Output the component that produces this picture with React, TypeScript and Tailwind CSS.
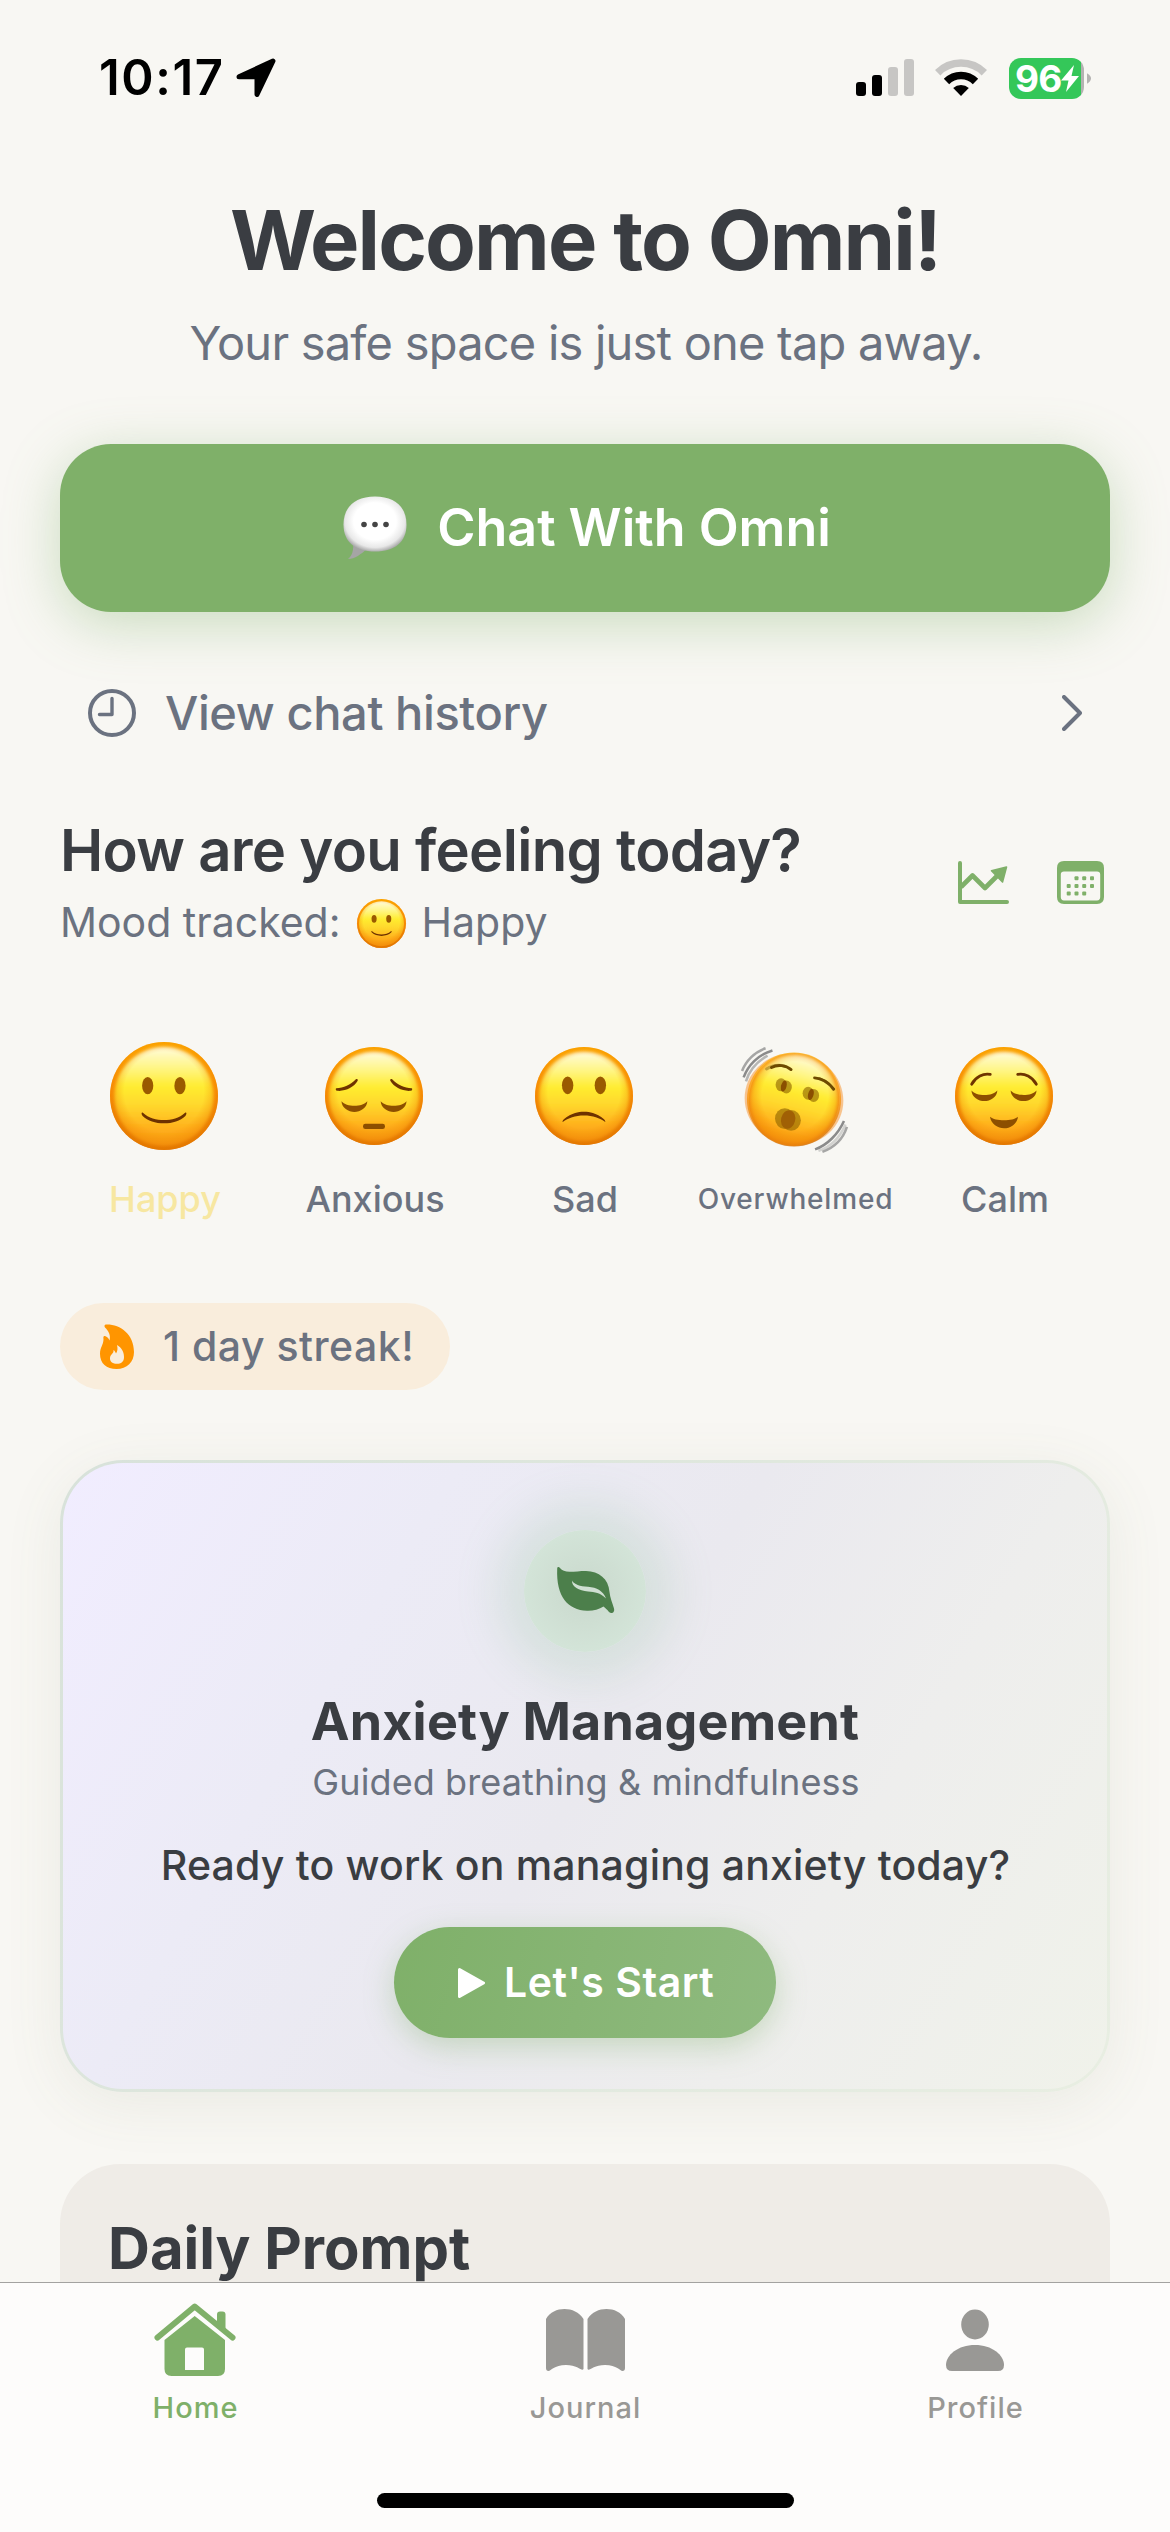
import type { ReactNode } from "react";

function Face({ children, size, tilt = false }: { children: ReactNode; size: string; tilt?: boolean }) {
  return (
    <svg viewBox="0 0 100 100" className={`${size} overflow-visible`}>
      <defs>
        <linearGradient id="rim" x1="0" y1="0" x2="0" y2="1">
          <stop offset="0" stopColor="#ffb000" />
          <stop offset="0.45" stopColor="#fb9208" />
          <stop offset="1" stopColor="#cc6700" />
        </linearGradient>
        <linearGradient id="skin" x1="0" y1="0" x2="0" y2="1">
          <stop offset="0" stopColor="#fffbdc" />
          <stop offset="0.2" stopColor="#fff68a" />
          <stop offset="0.4" stopColor="#ffec30" />
          <stop offset="0.6" stopColor="#ffd62c" />
          <stop offset="0.82" stopColor="#ffb01c" />
          <stop offset="1" stopColor="#f59a12" />
        </linearGradient>
        <radialGradient id="shade" cx="0.5" cy="0.46" r="0.54">
          <stop offset="0.68" stopColor="#f58a00" stopOpacity="0" />
          <stop offset="1" stopColor="#f08000" stopOpacity="0.7" />
        </radialGradient>
        <filter id="soft" x="-10%" y="-10%" width="120%" height="120%">
          <feGaussianBlur stdDeviation="1.4" />
        </filter>
      </defs>
      {tilt ? (
        <g>
          <ellipse cx="50" cy="53.5" rx="50.5" ry="47" fill="#f6a04a" opacity="0.6" transform="rotate(12 50 53.5)" />
          <ellipse cx="50" cy="53.5" rx="48" ry="48" fill="url(#rim)" opacity="0.75" />
          <g transform="rotate(14 50 53.5)">
            <ellipse cx="50" cy="53.5" rx="44.5" ry="45.5" fill="url(#skin)" filter="url(#soft)" />
            <ellipse cx="50" cy="53.5" rx="46" ry="47.5" fill="url(#shade)" />
          </g>
        </g>
      ) : (
        <g>
          <circle cx="50" cy="50" r="50" fill="url(#rim)" />
          <circle cx="50" cy="50.5" r="46" fill="url(#skin)" filter="url(#soft)" />
          <circle cx="50" cy="50" r="50" fill="url(#shade)" />
        </g>
      )}
      {children}
    </svg>
  );
}

function HappyFace({ size }: { size: string }) {
  return (
    <Face size={size}>
      <ellipse cx="34.9" cy="40.4" rx="5.2" ry="8" fill="#9a5a00" />
      <ellipse cx="64.8" cy="40.4" rx="5.2" ry="8" fill="#9a5a00" />
      <path d="M30.2 65.2C36 70.6 43 72.3 50 72.3S64 70.6 69.8 65.2C71.2 65 71 67 69.8 68.5C65 73 58 75.3 50 75.3S35 73 30.2 68.5C29 67 28.8 65 30.2 65.2Z" fill="#6e3200" />
    </Face>
  );
}

function AnxiousFace() {
  return (
    <Face size="size-[98px]">
      <g fill="#6e3400">
        <path d="M11.500 42C19 42 26 38.500 31.500 33C33 32 34 33.200 33.200 34.800C29.500 41 21 45.500 12.500 44.700C10.800 44.300 10.500 42.500 11.500 42Z" />
        <path d="M88.500 42C81 42 74 38.500 68.500 33C67 32 66 33.200 66.800 34.800C70.500 41 79 45.500 87.500 44.700C89.200 44.300 89.500 42.500 88.500 42Z" />
      </g>
      <g fill="#8d4f00">
        <path d="M16.8 55.3C22 61.5 38 61.5 43.2 55.3C43 62 36 66.2 30 66.2S17 62 16.8 55.3Z" />
        <path d="M56.8 55.3C62 61.5 78 61.5 83.2 55.3C83 62 76 66.2 70 66.2S57 62 56.8 55.3Z" />
        <rect x="38.8" y="78.2" width="22.4" height="5.5" rx="2.4" />
      </g>
    </Face>
  );
}

function SadFace() {
  return (
    <Face size="size-[98px]">
      <ellipse cx="33.3" cy="39.1" rx="5.8" ry="9" fill="#9a5a00" />
      <ellipse cx="66.7" cy="39.1" rx="5.8" ry="9" fill="#9a5a00" />
      <path d="M28.3 76.5C27 74.5 37 66 50 66S73 74.5 71.7 76.5C66 72.5 59 70 50 70S34 72.5 28.3 76.5Z" fill="#6e3200" />
    </Face>
  );
}

function OverwhelmedFace() {
  return (
    <Face size="size-[98px]" tilt>
      <g fill="none" stroke="#6e4a00" strokeLinecap="round" strokeWidth="3">
        <path d="M27 21C33 17.500 42 18.500 47 23" />
        <path d="M71 31.5C79 32 86 37 90.5 43" />
        <path d="M22 22.5C28 18.5 36 18 42 20" opacity="0.4" />
        <path d="M76 32.5C82 34 88 39 90 43" opacity="0.5" />
      </g>
      <g fill="#8f6400" opacity="0.62">
        <ellipse cx="36.8" cy="38.6" rx="5.6" ry="6.6" />
        <ellipse cx="42.2" cy="40.8" rx="5.6" ry="6.6" />
        <ellipse cx="64.4" cy="47.2" rx="5.6" ry="6.6" />
        <ellipse cx="70" cy="49.4" rx="5.6" ry="6.6" />
        <ellipse cx="40.6" cy="73" rx="10" ry="10.6" />
        <ellipse cx="47" cy="74.8" rx="10" ry="10.6" />
      </g>
      <g fill="#8a4f00">
        <ellipse cx="39.6" cy="39.8" rx="2.8" ry="5.8" transform="rotate(14 39.6 39.8)" />
        <ellipse cx="67.2" cy="48.4" rx="2.8" ry="5.8" transform="rotate(14 67.2 48.4)" />
        <ellipse cx="44" cy="74" rx="7.2" ry="9.6" transform="rotate(14 44 74)" fill="#a06005" />
      </g>
      <g fill="none" stroke="#8b8b8b" strokeWidth="2.6">
        <path d="M-3 24.5C1 14 10 5 21 1.2" opacity="0.75" />
        <path d="M-1.4 31C3 19 13 8 28 3.5" />
        <path d="M1 35C4 25 12 15 23 8.8" opacity="0.6" />
        <path d="M71.5 104.5C84 100 95 89 101 75.5" />
        <path d="M79 107C91 102.500 100 94 104 81.500" opacity="0.75" />
        <path d="M75 106C87 102 97 92 102.500 79" opacity="0.35" />
      </g>
    </Face>
  );
}

function CalmFace() {
  return (
    <Face size="size-[98px]">
      <g fill="none" stroke="#6e3400" strokeWidth="2.8" strokeLinecap="round">
        <path d="M17 38C21 30.500 29 26.500 36 28" />
        <path d="M83 38C79 30.500 71 26.500 64 28" />
      </g>
      <g fill="#8d4f00">
        <path d="M16.800 44.300C22 50.500 38 50.500 43.200 44.300C43 51 36 55.200 30 55.200S17 51 16.800 44.300Z" />
        <path d="M56.800 44.300C62 50.500 78 50.500 83.200 44.300C83 51 76 55.200 70 55.200S57 51 56.800 44.300Z" />
        <path d="M35.700 71.200C41 76 59 76 64.300 71.200C63.500 78.500 56 83 50 83S36.500 78.500 35.700 71.200Z" />
      </g>
    </Face>
  );
}

function StatusBar() {
  return (
    <header className="flex h-[156px] shrink-0 items-center justify-between pr-[79px] pl-[99px] text-black">
      <div className="flex items-center">
        <span className="text-[49px] font-semibold tracking-[1.6px]">10:17</span>
        <svg viewBox="0 0 40 40" className="ml-[11px] size-[40px]">
          <path d="M3 18.800L37 3L21 36.500V18.800Z" fill="#000" stroke="#000" strokeWidth="5" strokeLinejoin="round" />
        </svg>
      </div>
      <div className="flex items-center">
        <svg viewBox="0 0 58 38" className="h-[38px] w-[58px]">
          <rect x="0" y="23" width="10" height="14" rx="3" />
          <rect x="16" y="16" width="10" height="21" rx="3" />
          <rect x="32" y="8" width="10" height="29" rx="3" fill="#c7c6c4" />
          <rect x="48" y="0" width="10" height="37" rx="3" fill="#c7c6c4" />
        </svg>
        <svg viewBox="0 0 52 38" className="ml-[21px] h-[38px] w-[52px]">
          <path d="M2.700 13.700A33 33 0 0 1 49.300 13.700" fill="none" stroke="#c7c6c4" strokeWidth="7.600" />
          <path d="M11.500 22.500A20.500 20.500 0 0 1 40.500 22.500" fill="none" stroke="#000" strokeWidth="7.600" />
          <path d="M26 37L18.200 29A11.500 11.500 0 0 1 33.800 29Z" fill="#000" />
        </svg>
        <div className="ml-[22px] flex h-[41px] w-[75px] items-center rounded-[12px] bg-linear-to-r from-[#34c759] from-96% to-[#b4b3b1] to-96% pl-[6px]">
          <span className="text-[37px] leading-[41px] font-bold tracking-[-0.8px] text-white">96</span>
          <svg viewBox="0 0 18 27" className="h-[27px] w-[18px] shrink-0">
            <path d="M13 0L0 15.500H7.500L5 27L18 11H10.500Z" fill="#fff" />
          </svg>
        </div>
        <svg viewBox="0 0 5 13" className="ml-[3px] h-[13px] w-[4px]">
          <path d="M0 0Q5 3 5 6.500T0 13Z" fill="#b4b3b1" />
        </svg>
      </div>
    </header>
  );
}

function MoodItem({ face, label, text }: { face: ReactNode; label: string; text: string }) {
  return (
    <div className="flex w-[210px] flex-col items-center">
      <div className="flex h-[120px] items-center">{face}</div>
      <span className={`mt-[18px] leading-[50px] font-medium whitespace-nowrap ${text}`}>{label}</span>
    </div>
  );
}

function Tab({ icon, label, color }: { icon: ReactNode; label: string; color: string }) {
  return (
    <div className={`flex w-[390px] flex-col items-center ${color}`}>
      <div className="flex h-[76px] items-end justify-center">{icon}</div>
      <span className="mt-[12px] pl-[1px] text-[29px] leading-[40px] font-medium tracking-[1px]">{label}</span>
    </div>
  );
}

export default function App() {
  return (
    <div className="flex h-[2532px] w-[1170px] flex-col overflow-hidden bg-[#f8f7f3] font-['Inter',sans-serif] text-[#3a3d42]">
      <div className="flex h-[2282px] shrink-0 flex-col overflow-hidden">
        <StatusBar />
        <main className="flex flex-1 flex-col px-[60px]">
          <h1 className="mt-[34px] text-center text-[83px] leading-[100px] font-bold tracking-[-1.9px]">Welcome to Omni!</h1>
          <p className="mt-[23px] pl-[2px] text-center text-[47px] leading-[60px] tracking-[-0.78px] text-[#6b7280]">Your safe space is just one tap away.</p>

          <button className="mt-[71px] flex h-[168px] shrink-0 items-center justify-center rounded-[51px] bg-[#7fb069] pl-[4px] text-[52px] font-semibold text-white shadow-[0_12px_54px_rgba(127,176,105,0.38)]">
            <svg viewBox="0 0 64 64" className="mr-[30px] size-[64px]">
              <defs>
                <radialGradient id="bubble" cx="0.5" cy="0.45" r="0.56">
                  <stop offset="0.6" stopColor="#ffffff" />
                  <stop offset="0.85" stopColor="#e8e8e8" />
                  <stop offset="1" stopColor="#a9a9a9" />
                </radialGradient>
              </defs>
              <path d="M10 46C11 54 9 60 5 63C12 63 18 58 24 53Z" fill="#a5a5a5" />
              <path d="M32 0.500C52 0.500 63.500 11 63.500 28.500S52 55.500 32 55.500S0.500 46 0.500 28.500S12 0.500 32 0.500Z" fill="url(#bubble)" />
              <g fill="#444"><circle cx="21" cy="28.500" r="2.800" /><circle cx="32" cy="28.500" r="2.800" /><circle cx="43" cy="28.500" r="2.800" /></g>
            </svg>
            <span>Chat With Omni</span>
          </button>

          <div className="mt-[71px] flex h-[60px] shrink-0 items-center pr-[28px] pl-[28px] text-[#6b7280]">
            <svg viewBox="0 0 48 48" className="size-[48px]" fill="none" stroke="currentColor" strokeLinecap="round" strokeLinejoin="round">
              <circle cx="24" cy="24" r="22" strokeWidth="4" />
              <path d="M24 9.500V25.500H11.500" strokeWidth="3.400" />
            </svg>
            <span className="ml-[29px] text-[47px] leading-[60px] font-medium tracking-[-0.4px]">View chat history</span>
            <svg viewBox="0 0 20 36" className="ml-auto h-[36px] w-[20px]" fill="none" stroke="currentColor" strokeWidth="4" strokeLinecap="round" strokeLinejoin="round">
              <path d="M2 2L18 18L2 34" />
            </svg>
          </div>

          <section className="mt-[67px] flex shrink-0 items-center justify-between">
            <div>
              <h2 className="text-[58px] leading-[80px] font-semibold tracking-[-0.7px] whitespace-nowrap">How are you feeling today?</h2>
              <div className="mt-[3px] flex h-[60px] items-center text-[41px] text-[#6b7280]">
                <span>Mood tracked:</span>
                <span className="mx-[16px] flex"><HappyFace size="size-[49px]" /></span>
                <span>Happy</span>
              </div>
            </div>
            <div className="flex items-center gap-[48px] pt-[2px] pr-[6px] text-[#7fb069]">
              <svg viewBox="0 0 51 43" className="h-[43px] w-[51px]" fill="none" stroke="currentColor" strokeWidth="4" strokeLinecap="round" strokeLinejoin="round">
                <path d="M2 2V41H49" />
                <path d="M3 26L14.500 14.500L27 27L42 12" strokeWidth="4.600" strokeLinecap="butt" />
                <path d="M33.500 9.800L48.500 6L44.500 21Z" fill="currentColor" strokeWidth="1.600" />
              </svg>
              <svg viewBox="0 0 47 43" className="h-[43px] w-[47px]">
                <path fill="currentColor" fillRule="evenodd" d="M7 0H40Q47 0 47 7V36Q47 43 40 43H7Q0 43 0 36V7Q0 0 7 0ZM7 10.500Q3.800 10.500 3.800 13.500V36Q3.800 39.400 7 39.400H40Q43.200 39.400 43.200 36V13.500Q43.200 10.500 40 10.500Z" />
                <g fill="currentColor">
                  <rect x="17.500" y="15.200" width="4" height="4" rx="1" /><rect x="25.200" y="15.200" width="4" height="4" rx="1" /><rect x="33" y="15.200" width="4" height="4" rx="1" />
                  <rect x="9.700" y="22.900" width="4" height="4" rx="1" /><rect x="17.500" y="22.900" width="4" height="4" rx="1" /><rect x="25.200" y="22.900" width="4" height="4" rx="1" /><rect x="33" y="22.900" width="4" height="4" rx="1" />
                  <rect x="9.700" y="30.600" width="4" height="4" rx="1" /><rect x="17.500" y="30.600" width="4" height="4" rx="1" /><rect x="25.200" y="30.600" width="4" height="4" rx="1" />
                </g>
              </svg>
            </div>
          </section>

          <section className="mt-[83px] ml-[-1px] flex w-[1050px] shrink-0">
            <MoodItem face={<HappyFace size="size-[108px]" />} label="Happy" text="pl-[2px] text-[36px] text-[#f7e7a1]" />
            <MoodItem face={<AnxiousFace />} label="Anxious" text="pl-[2px] text-[36px] text-[#6b7280]" />
            <MoodItem face={<SadFace />} label="Sad" text="pl-[2px] text-[36px] text-[#6b7280]" />
            <MoodItem face={<OverwhelmedFace />} label="Overwhelmed" text="pl-[3px] text-[28px] tracking-[0.8px] text-[#6b7280]" />
            <MoodItem face={<CalmFace />} label="Calm" text="pl-[2px] text-[36px] text-[#6b7280]" />
          </section>

          <div className="mt-[79px] flex h-[87px] w-[390px] shrink-0 items-center rounded-full bg-[#f9eddc] pl-[40px] text-[41px] font-medium tracking-[0.5px] text-[#6b7280]">
            <svg viewBox="0 0 34 45" className="mr-[29px] h-[45px] w-[34px]">
              <path fill="#ff9500" fillRule="evenodd" d="M6 0.500C20 0 34 10 34 28C34 38 27 45 16.500 45C6.500 45 0 39.500 0 30C0 23 3.500 21 3.500 15C3 12 4 11.500 5.500 12.200C7.500 13 9 14.500 9.500 16.500C11 11 8.500 7 5 3.500C4 2 4.500 0.600 6 0.500ZM17 21C18 25 17.500 27 16 29.500C15.500 28 14.500 26.500 13.500 26C14 30 10 30 10 34.500C10 38 13 39.800 17 39.800S24 38 24 33C24 27 21 23.500 17 21Z" />
            </svg>
            <span>1 day streak!</span>
          </div>

          <section className="mt-[70px] flex h-[632px] shrink-0 flex-col items-center rounded-[63px] bg-[linear-gradient(121deg,#d8e2da,#e8eee2)] p-[3px] shadow-[0_12px_60px_rgba(100,110,80,0.09)]">
            <div className="flex size-full flex-col items-center rounded-[60px] bg-[linear-gradient(121deg,#f1edff,#ecebf6_28%,#eae9ef_50%,#eeeeed_72%,#f0f2ea)]">
              <div className="mt-[67px] flex size-[122px] shrink-0 items-center justify-center rounded-full bg-[radial-gradient(circle_closest-side,#c9d8cc,#d3e4d8)] shadow-[0_0_44px_26px_rgba(127,184,140,0.19)]">
                <svg viewBox="0 0 60 50" className="h-[50px] w-[60px]">
                  <path d="M2.200 2.500C2.500 0.500 4 0.800 5.200 2.300C7 4.500 10 5.800 14.500 5.800C20 5.800 25 5 31 5C44 5.500 53.500 12.500 54.500 26C55 32 57.500 37 59 42.500C60 46.500 56.500 48.500 54 46C52 43.500 50.500 42 48.500 40.500C44 43.500 38 45 32 44.800C13 44 1 31 2.200 2.500Z" fill="#4c7f4b" />
                  <path d="M17 14.500C19 18.500 25 20.300 33 20.800C42 21.500 48 25 51 32.500C45 26.500 40 26.200 33 25.500C24 24.500 16.500 21 17 14.500Z" fill="#cfdfd2" />
                </svg>
              </div>
              <h3 className="mt-[40px] text-[52px] leading-[60px] font-bold tracking-[0.2px]">Anxiety Management</h3>
              <p className="mt-[5px] pl-[2px] text-[36px] leading-[50px] tracking-[0.1px] text-[#6b7280]">Guided breathing &amp; mindfulness</p>
              <p className="mt-[28px] pl-[1px] text-[41px] leading-[60px] font-medium tracking-[0.18px]">Ready to work on managing anxiety today?</p>
              <button className="mt-[32px] flex h-[111px] w-[382px] items-center rounded-full bg-[linear-gradient(106deg,#7fb069,#8fba7f)] pl-[64px] text-[41px] font-semibold tracking-[0.55px] text-white shadow-[0_9px_30px_rgba(127,176,105,0.35)]">
                <svg viewBox="0 0 27 30" className="mr-[19px] h-[30px] w-[27px]">
                  <path d="M1.500 1.500L25.500 15L1.500 28.500Z" fill="#fff" stroke="#fff" strokeWidth="3" strokeLinejoin="round" />
                </svg>
                <span>Let&apos;s Start</span>
              </button>
            </div>
          </section>

          <section className="mt-[72px] flex-1 rounded-t-[60px] bg-[#efece7] pt-[44px] pl-[48px]">
            <h2 className="text-[58px] leading-[80px] font-bold">Daily Prompt</h2>
          </section>
        </main>
      </div>

      <nav className="flex h-[250px] shrink-0 flex-col items-center border-t border-[#a3a2a0] bg-[#fdfcfb] pt-[17px]">
        <div className="flex">
          <Tab label="Home" color="text-[#7fb069]" icon={
            <svg viewBox="0 0 82 73" className="h-[73px] w-[82px]">
              <path d="M3.500 34.500L40.700 3.500L78.500 34.500" fill="none" stroke="currentColor" strokeWidth="6" strokeLinecap="round" strokeLinejoin="round" />
              <path d="M63 22V11.500Q63 8.500 66 8.500H68.500Q71.500 8.500 71.500 11.500V29Z" fill="currentColor" />
              <path fillRule="evenodd" fill="currentColor" d="M10.500 37L40.700 13L71 37V66Q71 73 64 73H17.500Q10.500 73 10.500 66ZM33 44.500Q31 44.500 31 46.500V67H50V46.500Q50 44.500 48 44.500Z" />
            </svg>} />
          <Tab label="Journal" color="text-[#999895]" icon={
            <svg viewBox="0 0 79 62" className="mb-[5px] h-[62px] w-[79px]" fill="currentColor">
              <path d="M0 10C4 3 11 0 18.500 0S33 3 37.500 10V60C36 63 32 56 20 56C8 56 5 62 2.500 62Q0 62 0 59Z" />
              <path d="M79 10C75 3 68 0 60.500 0S46 3 41.500 10V60C43 63 47 56 59 56C71 56 74 62 76.500 62Q79 62 79 59Z" />
            </svg>} />
          <Tab label="Profile" color="text-[#999895]" icon={
            <svg viewBox="0 0 58 62" className="mb-[5px] h-[62px] w-[58px]" fill="currentColor">
              <ellipse cx="29" cy="15.500" rx="13.800" ry="15" />
              <path d="M29 36C46 36 58 46 58 56Q58 62 52 62H6Q0 62 0 56C0 46 12 36 29 36Z" />
            </svg>} />
        </div>
        <div className="mt-[65px] h-[15px] w-[417px] rounded-full bg-black" />
      </nav>
    </div>
  );
}
